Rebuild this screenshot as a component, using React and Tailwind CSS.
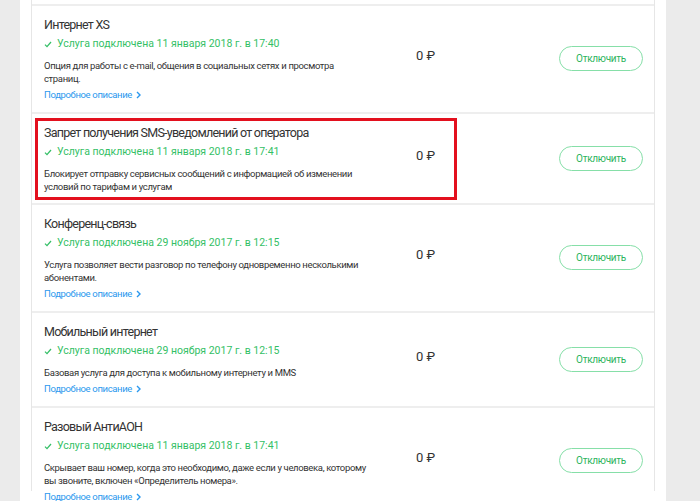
const services = [
  {
    title: "Интернет XS",
    date: "11 января 2018 г. в 17:40",
    desc: ["Опция для работы с e-mail, общения в социальных сетях и просмотра", "страниц."],
    link: true,
  },
  {
    title: "Запрет получения SMS-уведомлений от оператора",
    date: "11 января 2018 г. в 17:41",
    desc: ["Блокирует отправку сервисных сообщений с информацией об изменении", "условий по тарифам и услугам"],
    link: false,
    marked: true,
  },
  {
    title: "Конференц-связь",
    date: "29 ноября 2017 г. в 12:15",
    desc: ["Услуга позволяет вести разговор по телефону одновременно несколькими", "абонентами."],
    link: true,
  },
  {
    title: "Мобильный интернет",
    date: "29 ноября 2017 г. в 12:15",
    desc: ["Базовая услуга для доступа к мобильному интернету и MMS"],
    link: true,
  },
  {
    title: "Разовый АнтиАОН",
    date: "11 января 2018 г. в 17:41",
    desc: ["Скрывает ваш номер, когда это необходимо, даже если у человека, которому", "вы звоните, включен «Определитель номера»."],
    link: true,
  },
];

function ServiceRow({ s }) {
  return (
    <div className="relative flex items-center border-b-2 border-[#eeeeee] pl-3 pr-[11px] pt-[9px] pb-[10px]">
      {s.marked && (
        <div className="pointer-events-none absolute left-[3px] top-[4px] h-[82px] w-[422px] border-[3px] border-[#e3101e]" />
      )}
      <div className="w-[319px] shrink-0">
        <div className="whitespace-nowrap text-[12.5px] leading-[20px] tracking-[-0.75px] text-[#333333]">{s.title}</div>
        <div className="mt-[2px] flex items-center gap-[5px] text-[10.5px] leading-[14px] text-[#34bf66]">
          <svg width="8" height="7" viewBox="0 0 8 7" fill="none">
            <path d="M1 3.6 3 5.6 7 1" stroke="#34bf66" strokeWidth="1.3" />
          </svg>
          <span>Услуга подключена {s.date}</span>
        </div>
        <div className="mt-[8px] whitespace-nowrap text-[9.5px] leading-[13px] tracking-[-0.35px] text-[#333333]">
          {s.desc.map((line) => (
            <div key={line}>{line}</div>
          ))}
        </div>
        {s.link && (
          <div className="mt-[3px] flex items-center gap-[4px] text-[9.5px] leading-[14px] tracking-[-0.35px] text-[#2a98ee]">
            <span>Подробное описание</span>
            <svg width="5" height="8" viewBox="0 0 5 8" fill="none">
              <path d="M1 1l3 3-3 3" stroke="#2a98ee" strokeWidth="1.4" />
            </svg>
          </div>
        )}
      </div>
      <div className="ml-[53px] -mt-[5px] text-[13px] text-[#333333]">0 ₽</div>
      <button className="ml-auto h-[25px] w-[84px] rounded-full border-[1.5px] border-[#86dfa8] bg-white text-[10px] tracking-[-0.3px] text-[#2db45d]">
        Отключить
      </button>
    </div>
  );
}

export default function App() {
  return (
    <div
      className="flex h-[501px] w-[700px] overflow-hidden bg-[#ebebeb]"
      style={{ fontFamily: "Roboto, 'Liberation Sans', sans-serif" }}
    >
      <div className="ml-[20px] w-[646px] bg-white px-[11px]">
        <div className="-mt-[10px] h-full border-x border-[#e6e6e6] bg-white">
          <div className="h-[16px] border-b-2 border-[#eeeeee]" />
          {services.map((s) => (
            <ServiceRow key={s.title} s={s} />
          ))}
        </div>
      </div>
    </div>
  );
}
